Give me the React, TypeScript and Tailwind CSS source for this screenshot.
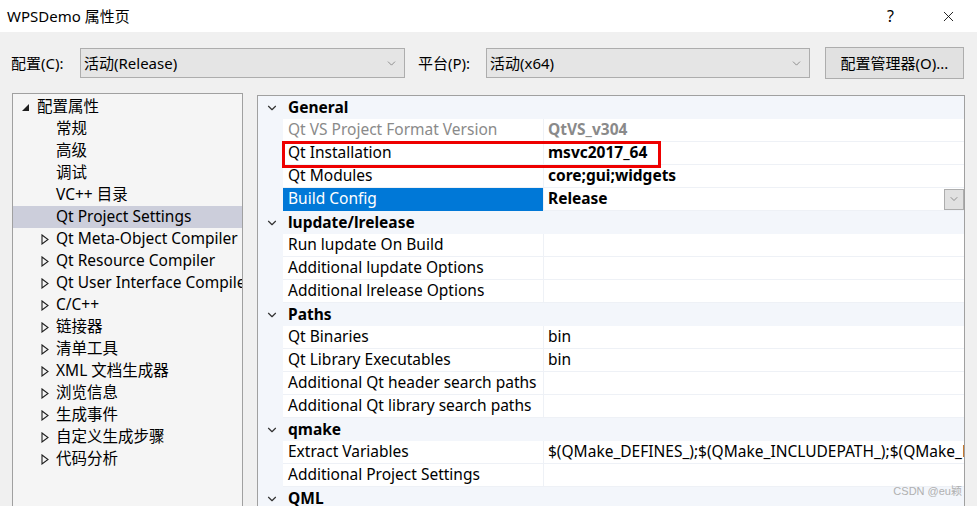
import { ChevronDown, X } from "lucide-react";

const font = { fontFamily: '"Noto Sans", "Noto Sans CJK SC", sans-serif' };

type Row =
  | { kind: "cat"; label: string }
  | { kind: "prop"; name: string; value?: string; bold?: boolean; muted?: boolean; selected?: boolean; dropdown?: boolean };

const rows: Row[] = [
  { kind: "cat", label: "General" },
  { kind: "prop", name: "Qt VS Project Format Version", value: "QtVS_v304", bold: true, muted: true },
  { kind: "prop", name: "Qt Installation", value: "msvc2017_64", bold: true },
  { kind: "prop", name: "Qt Modules", value: "core;gui;widgets", bold: true },
  { kind: "prop", name: "Build Config", value: "Release", bold: true, selected: true, dropdown: true },
  { kind: "cat", label: "lupdate/lrelease" },
  { kind: "prop", name: "Run lupdate On Build" },
  { kind: "prop", name: "Additional lupdate Options" },
  { kind: "prop", name: "Additional lrelease Options" },
  { kind: "cat", label: "Paths" },
  { kind: "prop", name: "Qt Binaries", value: "bin" },
  { kind: "prop", name: "Qt Library Executables", value: "bin" },
  { kind: "prop", name: "Additional Qt header search paths" },
  { kind: "prop", name: "Additional Qt library search paths" },
  { kind: "cat", label: "qmake" },
  { kind: "prop", name: "Extract Variables", value: "$(QMake_DEFINES_);$(QMake_INCLUDEPATH_);$(QMake_LIBS_)" },
  { kind: "prop", name: "Additional Project Settings" },
  { kind: "cat", label: "QML" },
];

const treeChildren = ["常规", "高级", "调试", "VC++ 目录", "Qt Project Settings"];
const treeCollapsed = [
  "Qt Meta-Object Compiler",
  "Qt Resource Compiler",
  "Qt User Interface Compiler",
  "C/C++",
  "链接器",
  "清单工具",
  "XML 文档生成器",
  "浏览信息",
  "生成事件",
  "自定义生成步骤",
  "代码分析",
];

function Combo({ text, w }: { text: string; w: string }) {
  return (
    <div className={`${w} h-[30px] border border-[#adadad] bg-[#e5e5e5] flex items-center pl-[3px] pr-[6px]`}>
      <span className="flex-1 text-[15px] text-black whitespace-nowrap">{text}</span>
      <ChevronDown className="w-[13px] h-[13px] text-[#606060]" strokeWidth={1.2} />
    </div>
  );
}

function HollowTri() {
  return (
    <svg width="8" height="11" viewBox="0 0 8 11" className="shrink-0">
      <path d="M1 1 L7 5.5 L1 10 Z" fill="none" stroke="#1e1e1e" strokeWidth="1.1" />
    </svg>
  );
}

export default function App() {
  return (
    <div className="w-[977px] h-[506px] overflow-hidden bg-[#f0f0f0] flex flex-col relative" style={font}>
      {/* title bar */}
      <div className="h-[32px] bg-white flex items-center shrink-0">
        <span className="pl-[7px] text-[15px] text-black flex-1">WPSDemo 属性页</span>
        <span className="text-[16px] text-black mr-[46px]">?</span>
        <X className="w-[17px] h-[17px] mr-[20px] text-black" strokeWidth={1.2} />
      </div>

      {/* config row */}
      <div className="flex items-center h-[30px] mt-[16px] shrink-0 text-[15px] text-black">
        <span className="pl-[11px] w-[80px]">配置(C):</span>
        <Combo text="活动(Release)" w="w-[325px]" />
        <span className="ml-[13px] w-[68px]">平台(P):</span>
        <Combo text="活动(x64)" w="w-[324px]" />
        <div className="ml-[15px] w-[139px] h-[32px] border border-[#adadad] bg-[#e1e1e1] flex items-center justify-center">
          配置管理器(O)...
        </div>
      </div>

      {/* main area */}
      <div className="flex items-start mt-[15px] flex-1 min-h-0">
        {/* tree */}
        <div className="ml-[12px] w-[231px] h-[420px] border border-[#a0a0a0] bg-[#f5f5f5] pt-[2px] shrink-0 overflow-hidden">
          <div className="h-[22px] flex items-center text-[15.5px] text-black">
            <svg width="9" height="9" viewBox="0 0 9 9" className="ml-[8px] mr-[7px]">
              <path d="M8 1 L8 8 L1 8 Z" fill="#1e1e1e" />
            </svg>
            配置属性
          </div>
          {treeChildren.map((t) => (
            <div
              key={t}
              className={`h-[22px] flex items-center pl-[43px] text-[15.5px] text-black whitespace-nowrap ${
                t === "Qt Project Settings" ? "bg-[#cccedb]" : ""
              }`}
            >
              {t}
            </div>
          ))}
          {treeCollapsed.map((t) => (
            <div key={t} className="h-[22px] flex items-center pl-[28px] text-[15.5px] text-black whitespace-nowrap">
              <HollowTri />
              <span className="ml-[7px]">{t}</span>
            </div>
          ))}
        </div>

        {/* property grid */}
        <div className="ml-[14px] mt-[2px] w-[708px] h-[420px] border border-[#a0a0a0] bg-[#f3f6fb] overflow-hidden relative shrink-0">
          {rows.map((r, i) =>
            r.kind === "cat" ? (
              <div key={i} className="h-[23px] flex items-center text-[15.5px] font-bold text-black">
                <ChevronDown className="w-[14px] h-[14px] ml-[7px] mr-[9px] text-[#333]" strokeWidth={2} />
                {r.label}
              </div>
            ) : (
              <div key={i} className="h-[23px] flex pl-[25px]">
                <div
                  className={`w-[260px] shrink-0 flex items-center pl-[5px] text-[15.5px] whitespace-nowrap overflow-hidden border-b ${
                    r.selected
                      ? "bg-[#0078d7] text-white border-[#0078d7]"
                      : r.muted
                        ? "bg-white text-[#8a8a8a] border-[#eef1f6]"
                        : "bg-white text-black border-[#eef1f6]"
                  }`}
                >
                  {r.name}
                </div>
                <div
                  className={`flex-1 flex items-center pl-[4px] text-[15.5px] whitespace-nowrap overflow-hidden bg-white border-b border-l border-[#eef1f6] ${
                    r.bold ? "font-bold" : ""
                  } ${r.muted ? "text-[#8a8a8a]" : "text-black"}`}
                >
                  <span className="flex-1 overflow-hidden">{r.value}</span>
                  {r.dropdown && (
                    <div className="w-[20px] h-[21px] bg-[#e1e1e1] border border-[#adadad] flex items-center justify-center shrink-0">
                      <ChevronDown className="w-[12px] h-[12px] text-[#555]" strokeWidth={1.2} />
                    </div>
                  )}
                </div>
              </div>
            )
          )}
          {/* highlight box */}
          <div className="absolute left-[24px] top-[45px] w-[379px] h-[27px] border-[3px] border-[#ee0000] pointer-events-none" />
        </div>
      </div>

      {/* watermark */}
      <div className="absolute right-[15px] bottom-[7px] text-[11px] text-[#b0b0b0]" style={{ fontFamily: '"Liberation Sans", "Noto Sans CJK SC", sans-serif' }}>
        CSDN @eu颖
      </div>
    </div>
  );
}
